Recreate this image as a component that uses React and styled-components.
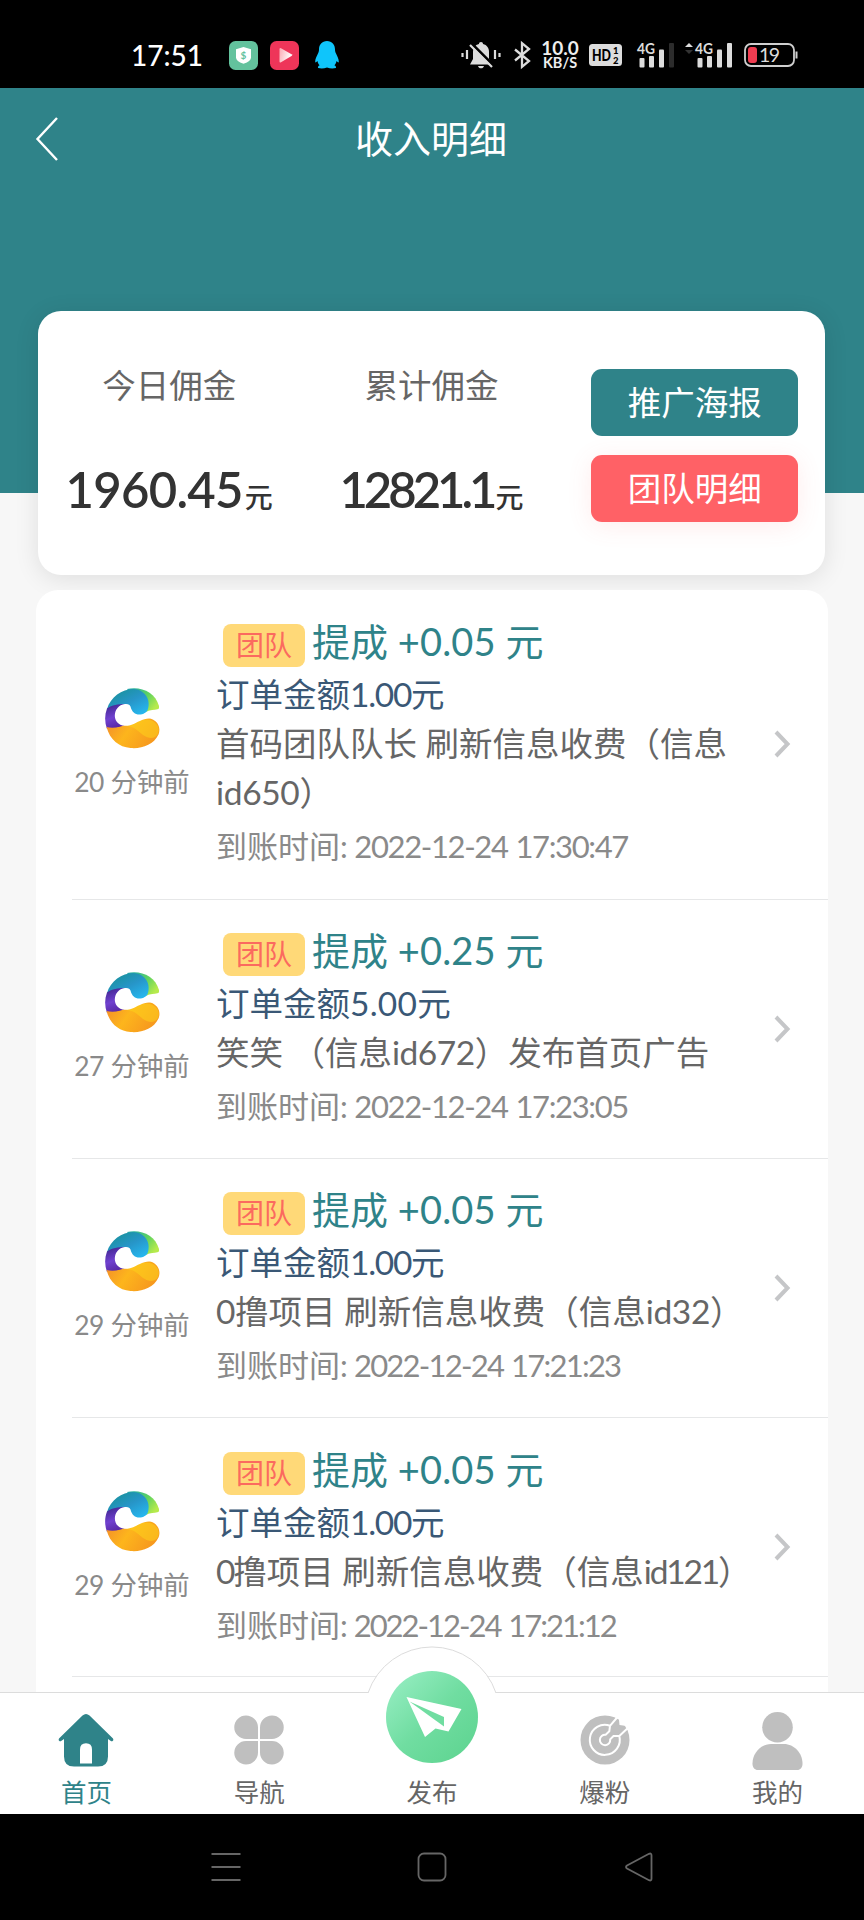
import React from "react";
import styled, { createGlobalStyle } from "styled-components";

const GlobalStyle = createGlobalStyle`
  * {
    box-sizing: border-box;
  }

  body {
    margin: 0;
    background: #f7f7f7;
    font-family: Lato, "Noto Sans CJK SC", sans-serif;
  }

  svg {
    display: block;
    flex-shrink: 0;
    overflow: visible;
  }
`;

const Screen = styled.div`
  display: flex;
  flex-direction: column;
  width: 864px;
  height: 1920px;
  overflow: hidden;
  background: #f7f7f7;
`;

const StatusBar = styled.div`
  display: flex;
  flex-shrink: 0;
  align-items: center;
  justify-content: space-between;
  height: 88px;
  padding: 22px 65px 0 131px;
  background: #000;
`;

const StatusGroup = styled.div`
  display: flex;
  align-items: center;
  gap: ${(props) => props.$gap}px;
`;

const Clock = styled.span`
  width: 86px;
  color: #fff;
  font-size: 28px;
  font-weight: 500;
  line-height: 30px;
`;

const NetSpeed = styled.div`
  display: flex;
  flex-direction: column;
  align-items: center;
  width: 38px;
  color: #eee;
  font-weight: 700;
`;

const SpeedValue = styled.span`
  font-size: 19px;
  line-height: 16px;
`;

const SpeedUnit = styled.span`
  font-size: 14.5px;
  line-height: 14px;
`;

const Header = styled.header`
  flex-shrink: 0;
  height: 405px;
  background: #2f8389;
`;

const TitleBar = styled.div`
  display: grid;
  grid-template-columns: 98px 1fr 98px;
  align-items: center;
  height: 102px;
  padding: 0 36px;
`;

const Title = styled.h1`
  margin: 0 2px 6px 0;
  color: #fff;
  font-size: 38px;
  font-weight: 400;
  text-align: center;
`;

const Summary = styled.section`
  display: grid;
  flex-shrink: 0;
  grid-template-columns: repeat(3, 1fr);
  width: 787px;
  height: 264px;
  margin: -182px 0 0 38px;
  border-radius: 23px;
  background: #fff;
  box-shadow: 0 4px 24px rgba(0, 0, 0, 0.1);
`;

const Stat = styled.div`
  display: flex;
  flex-direction: column;
  align-items: center;
  padding-top: 50px;
`;

const StatLabel = styled.div`
  color: #666;
  font-size: 33.5px;
  line-height: 48px;
`;

const StatValue = styled.div`
  display: flex;
  align-items: baseline;
  margin-top: 48px;
  color: #333;
  font-size: 49px;
  font-weight: 600;
  line-height: 64px;
  white-space: nowrap;
  letter-spacing: ${(props) => props.$tracking}px;
`;

const Unit = styled.span`
  margin-left: 2px;
  font-size: 28px;
  font-weight: 500;
  letter-spacing: 0;
`;

const Actions = styled.div`
  display: flex;
  flex-direction: column;
  align-items: center;
  gap: 19px;
  padding: 58px 0 0 2px;
`;

const ActionButton = styled.button`
  width: 207px;
  height: 67px;
  padding: 0 0 4px;
  border: 0;
  border-radius: 11px;
  background: ${(props) => (props.$danger ? "#ff6166" : "#2f8389")};
  box-shadow: ${(props) => (props.$danger ? "0 4px 24px rgba(255, 97, 102, 0.12)" : "none")};
  color: #fff;
  font-family: inherit;
  font-size: 33.5px;
`;

const List = styled.main`
  flex: 1;
  min-height: 0;
  width: 792px;
  margin: 15px 0 0 36px;
  padding-left: 36px;
  overflow: hidden;
  border-radius: 22px 22px 0 0;
  background: #fff;
`;

const Row = styled.article`
  display: flex;
  align-items: center;
  height: ${(props) => (props.$tall ? 309.5 : 259.3)}px;
  border-bottom: 1.5px solid #e6e7e8;
`;

const Source = styled.div`
  display: flex;
  flex-direction: column;
  align-items: center;
  width: 120px;
  height: 133px;
  padding-top: 10px;
`;

const Ago = styled.div`
  margin-top: 15px;
  color: #8a8a8a;
  font-size: 26.4px;
  line-height: 36px;
  white-space: nowrap;
`;

const Details = styled.div`
  width: 557px;
  margin-left: 24px;
`;

const Commission = styled.div`
  display: flex;
  align-items: center;
  height: 57px;
  padding-left: 7px;
  color: #2f8389;
  font-size: 38px;
  line-height: 57px;
  white-space: pre;
`;

const Tag = styled.span`
  width: 82px;
  height: 43px;
  margin: 8px 7px 0 0;
  border-radius: 8px;
  background: #ffd978;
  color: #fb6a5f;
  font-size: 28px;
  line-height: 42px;
  text-align: center;
`;

const Order = styled.div`
  color: #3a5876;
  font-size: 33.5px;
  line-height: 49px;
`;

const Description = styled.div`
  color: #666;
  font-size: 33.5px;
  line-height: 49px;
`;

const Received = styled.div`
  color: #8a8a8a;
  font-size: 31px;
  line-height: 58px;
`;

const Latin = styled.span`
  letter-spacing: ${(props) => props.$tracking}em;
`;

const TabBar = styled.nav`
  position: relative;
  display: grid;
  flex-shrink: 0;
  grid-template-columns: repeat(5, 1fr);
  height: 122px;
  border-top: 1px solid #dcdcdc;
  background: #fff;
`;

const Tab = styled.div`
  display: flex;
  flex-direction: column;
  align-items: center;
  justify-content: flex-end;
  padding-bottom: 3px;
  color: ${(props) => (props.$active ? "#2f8389" : "#666")};
`;

const TabLabel = styled.span`
  margin-top: 4px;
  font-size: 25.5px;
  line-height: 38px;
`;

const PublishBump = styled.div`
  position: absolute;
  top: -47px;
  left: 362px;
`;

const SystemNav = styled.div`
  display: grid;
  flex-shrink: 0;
  grid-template-columns: 30px 30px 30px;
  align-items: center;
  justify-content: center;
  gap: 176.5px;
  height: 106px;
  background: #000;
`;

const records = [
  {
    ago: "20 分钟前",
    amount: "+0.05",
    order: "1.00",
    text: "首码团队队长 刷新信息收费（信息id650）",
    textTracking: -0.01,
    time: "2022-12-24 17:30:47",
    timeTracking: -0.044,
    tall: true,
  },
  {
    ago: "27 分钟前",
    amount: "+0.25",
    order: "5.00",
    text: "笑笑 （信息id672）发布首页广告",
    textTracking: -0.015,
    time: "2022-12-24 17:23:05",
    timeTracking: -0.044,
  },
  {
    ago: "29 分钟前",
    amount: "+0.05",
    order: "1.00",
    text: "0撸项目 刷新信息收费（信息id32）",
    textTracking: -0.01,
    time: "2022-12-24 17:21:23",
    timeTracking: -0.057,
  },
  {
    ago: "29 分钟前",
    amount: "+0.05",
    order: "1.00",
    text: "0撸项目 刷新信息收费（信息id121）",
    textTracking: -0.065,
    time: "2022-12-24 17:21:12",
    timeTracking: -0.065,
  },
];

function Mixed({ text, tracking = -0.02 }) {
  return text.split(/([A-Za-z0-9.+:-]+)/).map((part, i) =>
    i % 2 ? (
      <Latin key={i} $tracking={tracking}>
        {part}
      </Latin>
    ) : (
      part
    )
  );
}

function WalletIcon() {
  return (
    <svg width="29" height="29" viewBox="0 0 29 29">
      <rect width="29" height="29" rx="6.5" fill="#63c29d" />
      <path d="M14.5 6l7.500 2.200v8.300q0 3.700-7.500 6.300-7.500-2.600-7.500-6.300V8.200z" fill="#fff" />
      <text x="14.5" y="18" fontSize="10" fontWeight="700" textAnchor="middle" fill="#63c29d">
        $
      </text>
    </svg>
  );
}

function VideoIcon() {
  return (
    <svg width="29" height="29" viewBox="0 0 29 29">
      <defs>
        <linearGradient id="play" x1="0" y1="0" x2="1" y2="0.3">
          <stop offset="0" stopColor="#fba9b3" />
          <stop offset="1" stopColor="#fff" />
        </linearGradient>
      </defs>
      <rect width="29" height="29" rx="6.5" fill="#ee3559" />
      <path d="M9.500 8.200q0-1.700 1.500-1l10.500 6q1.500.9 0 1.800L11 21.300q-1.500.8-1.500-.9z" fill="url(#play)" />
    </svg>
  );
}

function PenguinIcon() {
  return (
    <svg width="28" height="28" viewBox="-4 0 28 28">
      <path
        d="M12 0c5 0 8 3.600 8 8.500 0 1.500.3 2.500 1 4 1.200 2.500 2.800 5.500 2.800 8 0 1.300-.8 1.300-2.200-.4-.4 1.900-1.200 3.200-2.200 4.200 1.300.8 2 1.500 1.500 2.700-3 .8-6 .5-8.900-.4-2.900.9-5.900 1.200-8.900.4-.5-1.200.2-1.900 1.500-2.700-1-1-1.800-2.300-2.200-4.200C1 21.800.2 21.800.2 20.500c0-2.500 1.600-5.500 2.800-8 .7-1.500 1-2.500 1-4C4 3.600 7 0 12 0z"
        fill="#0fc5fb"
      />
    </svg>
  );
}

function MutedBellIcon() {
  return (
    <svg width="42" height="28" viewBox="0 0 42 28">
      <path
        d="M20 1c1.300 0 2 .8 2 2 4 1 6 4 6 8v7l3 5.500H9l3-5.500v-7c0-4 2-7 6-8 0-1.200.7-2 2-2zM17 25h6c-.5 1.500-1.500 2.300-3 2.300S17.500 26.500 17 25z"
        fill="#dcdcdc"
      />
      <path d="M10.500 2.500l23 23" stroke="#000" strokeWidth="3" />
      <path d="M9 4l22 22M1.500 12v4M6 9v9M34 9v9M38.500 12v4" stroke="#dcdcdc" strokeWidth="2.2" />
    </svg>
  );
}

function BluetoothIcon() {
  return (
    <svg width="18" height="28" viewBox="0 0 18 28">
      <path d="M2 8.500l14 11.500-7 5.800V2.200L16 8 2 19.500" fill="none" stroke="#dcdcdc" strokeWidth="2.3" />
    </svg>
  );
}

function HdIcon() {
  return (
    <svg width="38" height="22" viewBox="0 0 38 22" fontWeight="900">
      <rect width="33" height="22" rx="3.5" fill="#dcdcdc" />
      <text x="3" y="17" fontSize="17" textLength="19" lengthAdjust="spacingAndGlyphs">
        HD
      </text>
      <text x="24" y="10" fontSize="9.5">
        1
      </text>
      <text x="24" y="20" fontSize="9.5">
        2
      </text>
    </svg>
  );
}

function SignalIcon({ data, full }) {
  return (
    <svg width={data ? 50 : 37} height="26" viewBox={data ? "-11 0 50 26" : "0 0 37 26"} fill="#dcdcdc">
      {data && (
        <>
          <path d="M-10 5l4-4 4 4z" />
          <path d="M-10 8l4 4 4-4z" fill="#333" />
        </>
      )}
      <text x="0" y="12" fontSize="16" fontWeight="700" textLength="18" lengthAdjust="spacingAndGlyphs">
        4G
      </text>
      <rect x="2.5" y="16" width="5" height="9.5" rx="1" />
      <rect x="12" y="14" width="5" height="11.5" rx="1" />
      <rect x="22" y="7.5" width="5" height="18" rx="1" />
      <rect x="32" y="1" width="5" height="24.5" rx="1" fill={full ? "#dcdcdc" : "#2c2c2c"} />
    </svg>
  );
}

function BatteryIcon() {
  return (
    <svg width="55" height="24" viewBox="0 0 55 24">
      <rect x="1" y="1" width="49" height="22" rx="6" fill="none" stroke="#cfcfcf" strokeWidth="1.8" />
      <path d="M52.500 8.500v7" stroke="#cfcfcf" strokeWidth="2" />
      <rect x="4" y="4" width="9" height="16" rx="3" fill="#f03c50" />
      <text x="15" y="19" fontSize="19.5" textLength="21" fill="#dcdcdc">
        19
      </text>
    </svg>
  );
}

function LogoIcon() {
  return (
    <svg width="56" height="61" viewBox="-1 0 56 61">
      <defs>
        <linearGradient id="logoGreen" x1="0" y1="0" x2="1" y2="0.6">
          <stop offset="0" stopColor="#1fa9b0" />
          <stop offset="0.6" stopColor="#5fd35f" />
          <stop offset="1" stopColor="#b6ea4c" />
        </linearGradient>
        <linearGradient id="logoBlue" x1="0" y1="0" x2="0.8" y2="1">
          <stop offset="0" stopColor="#15918f" />
          <stop offset="0.55" stopColor="#2795c8" />
          <stop offset="1" stopColor="#26b9f0" />
        </linearGradient>
        <linearGradient id="logoPurple" x1="0" y1="0" x2="0.3" y2="1">
          <stop offset="0" stopColor="#3b2389" />
          <stop offset="0.6" stopColor="#7041cf" />
          <stop offset="1" stopColor="#5a2aa8" />
        </linearGradient>
        <linearGradient id="logoOrange" x1="0" y1="0" x2="1" y2="0.4">
          <stop offset="0" stopColor="#f28a2c" />
          <stop offset="0.5" stopColor="#fdb51c" />
          <stop offset="1" stopColor="#f79a1e" />
        </linearGradient>
      </defs>
      <path d="M22 1C36-2 50 4 54 18c.7 5-4 6.500-14 6z" fill="url(#logoGreen)" />
      <path d="M2 21C6 7 22-2 34 2c9 4 11 12 9 19-2 6-8 8-14 6L14 22z" fill="url(#logoBlue)" />
      <path d="M2 20.500C7 17 13 16 20 16l-2 20 3 3-19 2C-.5 34-.5 27 2 20.500z" fill="url(#logoPurple)" />
      <path d="M1.500 39c6 1.500 14 .5 21-3 8-4 15-7.500 23-5.500 8 2.500 10.500 10 8 16-5 10.500-17 14.500-28 13.500C14 59 5 52 1.500 39z" fill="url(#logoOrange)" />
      <path d="M20 38c8-4 17-8 25-6 8 2.500 10.500 9 8 14-3 5-9 5-15 1-5-4-9-9-18-9z" fill="#fdd21b" opacity="0.55" />
      <path
        d="M20 16c3-.3 5 .5 5.500 2.500 1.500 6 5 8.500 10 8 5-.7 6-3.500 9-4 4-.7 7-.5 10.500-2L57 33c-6-3.500-13-3.500-20-1-6 2.200-9 5.800-17 5.800C6 37 7 17.500 20 16z"
        fill="#fff"
      />
    </svg>
  );
}

function HomeIcon() {
  return (
    <svg width="56" height="58" viewBox="0 0 56 58">
      <path
        d="M24.500 4.500q3.500-3 7 0L55 27.500q1 1.500-.3 2.500-1.200.7-2.200-.2L50 28v17.500q0 10-10 10H16q-10 0-10-10V28l-2.500 1.800q-1 .9-2.200.2-1.300-1-.3-2.500z"
        fill="#2f8389"
      />
      <path d="M22 52.500V38.500q0-6.300 6-6.300t6 6.300v14z" fill="#fff" />
    </svg>
  );
}

function NavigationIcon() {
  return (
    <svg width="50" height="58" viewBox="0 0 50 58" fill="#bfbfbf">
      <path d="M12 4.500a12 12 0 0 1 12 12V28H12A11.750 11.750 0 0 1 12 4.500z" />
      <path d="M38 4.500a12 12 0 0 0-12 12V28h12A11.750 11.750 0 0 0 38 4.500z" />
      <path d="M12 53.500a12 12 0 0 0 12-12V30H12A11.750 11.750 0 0 0 12 53.500z" />
      <path d="M38 53.500a12 12 0 0 1-12-12V30h12A11.750 11.750 0 0 1 38 53.500z" />
    </svg>
  );
}

function TargetIcon() {
  return (
    <svg width="50" height="58" viewBox="0 -0.5 50 58">
      <circle cx="25" cy="28.5" r="24.5" fill="#bfbfbf" />
      <path d="M38.500 3L39.500 13.500 50 15 56 9 44-2z" fill="#fff" />
      <path
        d="M30 14.300A15 15 0 1 0 39.300 24.500H33.500L30.200 27.800A5.200 5.200 0 1 1 25.700 23.300L29.300 19.800zL38.800 4M39.300 24.500L50 14.500"
        fill="none"
        stroke="#fff"
        strokeWidth="2"
      />
    </svg>
  );
}

function UserIcon() {
  return (
    <svg width="51" height="58" viewBox="0 -1 51 58" fill="#bfbfbf">
      <circle cx="25.5" cy="15.3" r="15.3" />
      <path d="M19 32h13c10 0 18.500 9 18.500 19.500 0 4-2 6.500-5.500 6.500H6c-3.500 0-5.500-2.500-5.500-6.500C.5 41 9 32 19 32z" />
    </svg>
  );
}

function PublishIcon() {
  return (
    <svg width="140" height="120" viewBox="0 0 140 120">
      <defs>
        <linearGradient id="publish" x1="0.15" y1="0.15" x2="0.85" y2="0.85">
          <stop offset="0" stopColor="#8eeabb" />
          <stop offset="0.5" stopColor="#70dda1" />
          <stop offset="1" stopColor="#62d694" />
        </linearGradient>
      </defs>
      <path d="M6 47A67.500 67.500 0 0 1 134 47V52H6z" fill="#fff" />
      <path d="M6 47A67.500 67.500 0 0 1 134 47" fill="none" stroke="#dcdcdc" />
      <circle cx="70" cy="71" r="46" fill="url(#publish)" />
      <path d="M44.500 51L99.500 63 86.500 85.500 73.500 82.500 63 91z" fill="#fff" />
      <path d="M47.500 55.500L82 71v9.500z" fill="#70dda1" />
    </svg>
  );
}

function RecordRow({ record }) {
  return (
    <Row $tall={record.tall}>
      <Source>
        <LogoIcon />
        <Ago>
          <Mixed text={record.ago} />
        </Ago>
      </Source>
      <Details>
        <Commission>
          <Tag>团队</Tag>
          <span>
            <Mixed text={`提成 ${record.amount} 元`} tracking={0.005} />
          </span>
        </Commission>
        <Order>
          <Mixed text={`订单金额${record.order}元`} tracking={record.order === "1.00" ? -0.038 : 0.007} />
        </Order>
        <Description>
          <Mixed text={record.text} tracking={record.textTracking} />
        </Description>
        <Received>
          <Mixed text={`到账时间: ${record.time}`} tracking={record.timeTracking} />
        </Received>
      </Details>
      <svg width="18" height="28" viewBox="0 0 18 28">
        <path d="M3 2l11.500 12L3 26" fill="none" stroke="#c5c6c8" strokeWidth="4" />
      </svg>
    </Row>
  );
}

function App() {
  return (
    <>
      <GlobalStyle />
      <Screen>
        <StatusBar>
          <StatusGroup $gap={12}>
            <Clock>17:51</Clock>
            <WalletIcon />
            <VideoIcon />
            <PenguinIcon />
          </StatusGroup>
          <StatusGroup $gap={10}>
            <MutedBellIcon />
            <BluetoothIcon />
            <NetSpeed>
              <SpeedValue>10.0</SpeedValue>
              <SpeedUnit>KB/S</SpeedUnit>
            </NetSpeed>
            <HdIcon />
            <SignalIcon />
            <SignalIcon data full />
            <BatteryIcon />
          </StatusGroup>
        </StatusBar>
        <Header>
          <TitleBar>
            <svg width="24" height="46" viewBox="0 0 24 46">
              <path d="M21 2L1.500 23 21 44" fill="none" stroke="#fff" strokeWidth="2.4" />
            </svg>
            <Title>收入明细</Title>
          </TitleBar>
        </Header>
        <Summary>
          <Stat>
            <StatLabel>今日佣金</StatLabel>
            <StatValue $tracking={-0.7}>
              1960.45<Unit>元</Unit>
            </StatValue>
          </Stat>
          <Stat>
            <StatLabel>累计佣金</StatLabel>
            <StatValue $tracking={-4}>
              12821.1<Unit>元</Unit>
            </StatValue>
          </Stat>
          <Actions>
            <ActionButton>推广海报</ActionButton>
            <ActionButton $danger>团队明细</ActionButton>
          </Actions>
        </Summary>
        <List>
          {records.map((record) => (
            <RecordRow key={record.time} record={record} />
          ))}
        </List>
        <TabBar>
          <Tab $active>
            <HomeIcon />
            <TabLabel>首页</TabLabel>
          </Tab>
          <Tab>
            <NavigationIcon />
            <TabLabel>导航</TabLabel>
          </Tab>
          <Tab>
            <PublishBump>
              <PublishIcon />
            </PublishBump>
            <TabLabel>发布</TabLabel>
          </Tab>
          <Tab>
            <TargetIcon />
            <TabLabel>爆粉</TabLabel>
          </Tab>
          <Tab>
            <UserIcon />
            <TabLabel>我的</TabLabel>
          </Tab>
        </TabBar>
        <SystemNav>
          <svg width="30" height="30" viewBox="0 0 30 30">
            <path d="M.5 2h29M.5 15h29M.5 28h29" stroke="#666" strokeWidth="1.8" />
          </svg>
          <svg width="30" height="30" viewBox="0 0 30 30">
            <rect x="1.5" y="1.5" width="27" height="27" rx="5.5" fill="none" stroke="#666" strokeWidth="1.8" />
          </svg>
          <svg width="30" height="30" viewBox="0 0 30 30">
            <path
              d="M3 13.500L25 1.800q2.500-1 2.500 1.500v23.400q0 2.500-2.500 1.500L3 16.500q-2-1.500 0-3z"
              fill="none"
              stroke="#666"
              strokeWidth="1.8"
            />
          </svg>
        </SystemNav>
      </Screen>
    </>
  );
}

export default App;
